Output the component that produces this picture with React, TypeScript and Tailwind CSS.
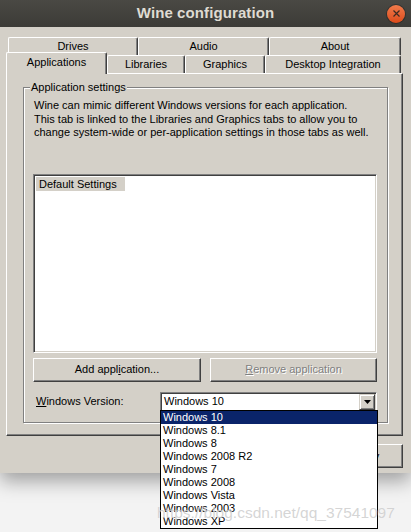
import React from 'react';

const versions = [
  'Windows 10',
  'Windows 8.1',
  'Windows 8',
  'Windows 2008 R2',
  'Windows 7',
  'Windows 2008',
  'Windows Vista',
  'Windows 2003',
  'Windows XP',
];

const raised =
  'border border-t-white border-l-white border-r-[#404040] border-b-[#404040] shadow-[inset_-1px_-1px_0_#808080]';

function Tab({ label, w, active }: { label: string; w: string; active?: boolean }) {
  return (
    <div
      className={`${w} ${
        active ? 'h-[22px] -mb-[1px] relative z-10 pb-[2px]' : 'h-[18px]'
      } flex items-center justify-center bg-[#d4d0c8] border-t border-l border-t-white border-l-white border-r border-r-[#404040] rounded-tl-[2px] rounded-tr-[2px] shadow-[inset_-1px_0_0_#808080] text-[11px] text-black`}
    >
      {label}
    </div>
  );
}

function Button({ children, w, disabled }: { children: React.ReactNode; w: string; disabled?: boolean }) {
  return (
    <div
      className={`${w} h-[24px] flex items-center justify-center bg-[#d4d0c8] ${raised} text-[11px] ${
        disabled ? 'text-[#808080] [text-shadow:1px_1px_0_#fff]' : 'text-black'
      }`}
    >
      {children}
    </div>
  );
}

export default function App() {
  return (
    <div className="w-[411px] h-[532px] relative overflow-hidden bg-[#f3f3f3] font-['Liberation_Sans',Arial,sans-serif]">
      {/* window */}
      <div className="h-[473px] flex flex-col bg-[#d4d0c8] shadow-[0_8px_18px_rgba(0,0,0,0.35)]">
        {/* title bar */}
        <div className="h-[27px] shrink-0 grid grid-cols-[1fr_auto_1fr] items-center bg-gradient-to-b from-[#4a4944] to-[#3c3b37]">
          <div />
          <div className="text-[15px] font-bold text-[#dfdbd2] tracking-[0.1px]">Wine configuration</div>
          <div className="justify-self-end mr-[6px] w-[18px] h-[18px] rounded-full bg-gradient-to-b from-[#f07a4a] to-[#dc4a18] flex items-center justify-center shadow-[0_0_0_1px_rgba(0,0,0,0.25)]">
            <svg width="7" height="7" viewBox="0 0 7 7">
              <path d="M0.5 0.5 L6.5 6.5 M6.5 0.5 L0.5 6.5" stroke="#3c2a22" strokeWidth="1.2" />
            </svg>
          </div>
        </div>

        {/* body */}
        <div className="flex flex-col px-[6px] pt-[10px]">
          {/* back tab row */}
          <div className="flex ml-[2px] h-[18px]">
            <Tab label="Drives" w="w-[130px]" />
            <Tab label="Audio" w="w-[131px]" />
            <Tab label="About" w="w-[132px]" />
          </div>
          {/* front tab row */}
          <div className="flex items-end h-[18px]">
            <Tab label="Applications" w="w-[101px]" active />
            <Tab label="Libraries" w="w-[78px]" />
            <Tab label="Graphics" w="w-[80px]" />
            <Tab label="Desktop Integration" w="w-[136px]" />
          </div>

          {/* tab panel */}
          <div className={`h-[363px] w-[397px] pt-[13px] pl-[16px] ${raised}`}>
            {/* group box */}
            <div className="relative w-[365px] h-[336px] border border-[#808080] shadow-[1px_1px_0_#fff,inset_1px_1px_0_#fff] pt-[11px] px-[9px]">
              <div className="absolute -top-[8px] left-[6px] px-[1px] bg-[#d4d0c8] text-[11px] text-black leading-[14px]">
                Application settings
              </div>
              <div className="text-[11px] leading-[13.5px] text-black pl-[1px]">
                Wine can mimic different Windows versions for each application.
                <br />
                This tab is linked to the Libraries and Graphics tabs to allow you to
                <br />
                change system-wide or per-application settings in those tabs as well.
              </div>

              {/* list */}
              <div className="mt-[34px] w-[344px] h-[179px] bg-white border border-t-[#808080] border-l-[#808080] border-r-white border-b-white shadow-[inset_1px_1px_0_#404040,inset_-1px_-1px_0_#d4d0c8] p-[2px]">
                <div className="block w-[89px] h-[14px] bg-[#d4d0c8] text-[11px] leading-[14px] text-black pl-[3px]">
                  Default Settings
                </div>
              </div>

              {/* buttons */}
              <div className="flex gap-[9px] mt-[5px]">
                <Button w="w-[168px]">
                  <span>
                    Add appl<span className="underline">i</span>cation...
                  </span>
                </Button>
                <Button w="w-[167px]" disabled>
                  <span>
                    <span className="underline">R</span>emove application
                  </span>
                </Button>
              </div>

              {/* version row */}
              <div className="flex items-center mt-[10px]">
                <div className="w-[127px] pl-[3px] text-[11px] text-black">
                  <span className="underline">W</span>indows Version:
                </div>
                <div className="w-[217px] h-[20px] flex items-center bg-white border border-t-[#808080] border-l-[#808080] border-r-white border-b-white shadow-[inset_1px_1px_0_#404040,inset_-1px_-1px_0_#d4d0c8] pl-[3px] pr-[1px]">
                  <span className="flex-1 text-[11px] text-black">Windows 10</span>
                  <div className="w-[16px] h-[16px] flex items-center justify-center bg-[#d4d0c8] border border-t-[#d4d0c8] border-l-[#d4d0c8] border-r-[#404040] border-b-[#404040] shadow-[inset_1px_1px_0_#fff,inset_-1px_-1px_0_#808080]">
                    <svg width="7" height="4" viewBox="0 0 7 4">
                      <path d="M0 0 H7 L3.5 4 Z" fill="#000" />
                    </svg>
                  </div>
                </div>
              </div>
            </div>
          </div>

          {/* dialog buttons */}
          <div className="flex justify-end gap-[6px] mt-[8px] pr-[2px]">
            <Button w="w-[75px]">OK</Button>
            <Button w="w-[75px]">Cancel</Button>
            <Button w="w-[75px]">Apply</Button>
          </div>
        </div>
      </div>

      {/* open combo dropdown */}
      <div className="absolute left-[160px] top-[410px] w-[218px] bg-white border border-black">
        {versions.map((v, i) => (
          <div
            key={v}
            className={`h-[13px] leading-[13px] text-[11px] pl-[2px] ${
              i === 0 ? 'bg-[#0a246a] text-white' : 'text-black'
            }`}
          >
            {v}
          </div>
        ))}
      </div>

      {/* watermark */}
      <div className="absolute left-[157px] top-[501px] text-[15.5px] text-[rgba(195,195,195,0.7)] [text-shadow:0_0_1px_rgba(255,255,255,0.6)] pointer-events-none whitespace-nowrap">
        https://blog.csdn.net/qq_37541097
      </div>
    </div>
  );
}
